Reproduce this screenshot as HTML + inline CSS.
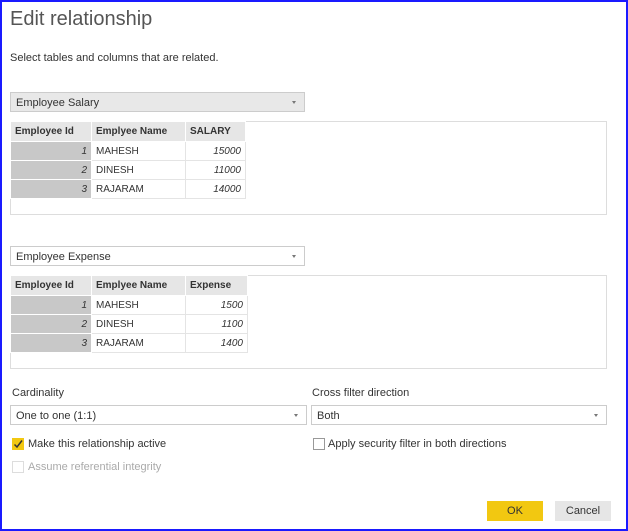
<!DOCTYPE html><html><head><style>
body{margin:0;width:628px;height:531px;overflow:hidden;background:#fff;font-family:"Liberation Sans",sans-serif;color:#333}
.f{position:absolute;left:0;top:0;width:624px;height:527px;border:2px solid #1a1aff}
.a{position:absolute}
.t{font-size:11px}
.dd{position:absolute;height:18px;border:1px solid #ccc;font-size:11px;line-height:18px;padding-left:5px;box-sizing:border-box}
.dd:after{content:"";position:absolute;right:8px;top:8px;border:2px solid transparent;border-top:3px solid #777}
.box{position:absolute;left:10px;width:597px;height:94px;border:1px solid #ddd;box-sizing:border-box}
table{position:absolute;left:-1px;top:-1px;border-collapse:collapse;font-size:10px}
td{border:1px solid #e4e4e4;height:18px;padding:0 4px}
th{background:#e6e6e6;text-align:left;height:19px;padding:0 4px;border:1px solid #fff;font-size:10px}
td.i{background:#c8c8c8;text-align:right;font-style:italic;border-color:#fff}
td.n{text-align:right;font-style:italic}
.cb{position:absolute;width:10px;height:10px;border:1px solid #999}
.btn{position:absolute;top:501px;width:56px;height:20px;font-size:11px;text-align:center;line-height:20px}
</style></head><body><div class="f"></div>
<div class="a" style="left:10px;top:8px;font-size:20px;color:#555">Edit relationship</div>
<div class="a t" style="left:10px;top:52px">Select tables and columns that are related.</div>
<div class="dd" style="left:10px;top:92px;width:295px;height:20px;background:#e8e8e8;line-height:20px">Employee Salary</div>
<div class="box" style="top:121px"><table>
<tr><th style="width:72px">Employee Id</th><th style="width:85px">Emplyee Name</th><th style="width:51px">SALARY</th></tr>
<tr><td class="i">1</td><td>MAHESH</td><td class="n">15000</td></tr>
<tr><td class="i">2</td><td>DINESH</td><td class="n">11000</td></tr>
<tr><td class="i">3</td><td>RAJARAM</td><td class="n">14000</td></tr></table></div>
<div class="dd" style="left:10px;top:246px;width:295px;height:20px;line-height:20px">Employee Expense</div>
<div class="box" style="top:275px"><table>
<tr><th style="width:72px">Employee Id</th><th style="width:85px">Emplyee Name</th><th style="width:53px">Expense</th></tr>
<tr><td class="i">1</td><td>MAHESH</td><td class="n">1500</td></tr>
<tr><td class="i">2</td><td>DINESH</td><td class="n">1100</td></tr>
<tr><td class="i">3</td><td>RAJARAM</td><td class="n">1400</td></tr></table></div>
<div class="a t" style="left:12px;top:387px">Cardinality</div>
<div class="a t" style="left:312px;top:387px">Cross filter direction</div>
<div class="dd" style="left:10px;top:405px;width:297px;height:20px;line-height:20px">One to one (1:1)</div>
<div class="dd" style="left:311px;top:405px;width:296px;height:20px;line-height:20px">Both</div>
<div class="cb" style="left:12px;top:438px;background:#f2c811;border-color:#f2c811"><svg width="10" height="10" style="position:absolute;left:0;top:0"><path d="M1.5 5.5L4 8L9 1.5" stroke="#333" stroke-width="1.5" fill="none"/></svg></div>
<div class="a t" style="left:28px;top:438px">Make this relationship active</div>
<div class="cb" style="left:313px;top:438px"></div>
<div class="a t" style="left:328px;top:438px">Apply security filter in both directions</div>
<div class="cb" style="left:12px;top:461px;border-color:#ddd"></div>
<div class="a t" style="left:28px;top:461px;color:#aaa">Assume referential integrity</div>
<div class="btn" style="left:487px;background:#f2c811">OK</div>
<div class="btn" style="left:555px;background:#e6e6e6">Cancel</div>
</body></html>
